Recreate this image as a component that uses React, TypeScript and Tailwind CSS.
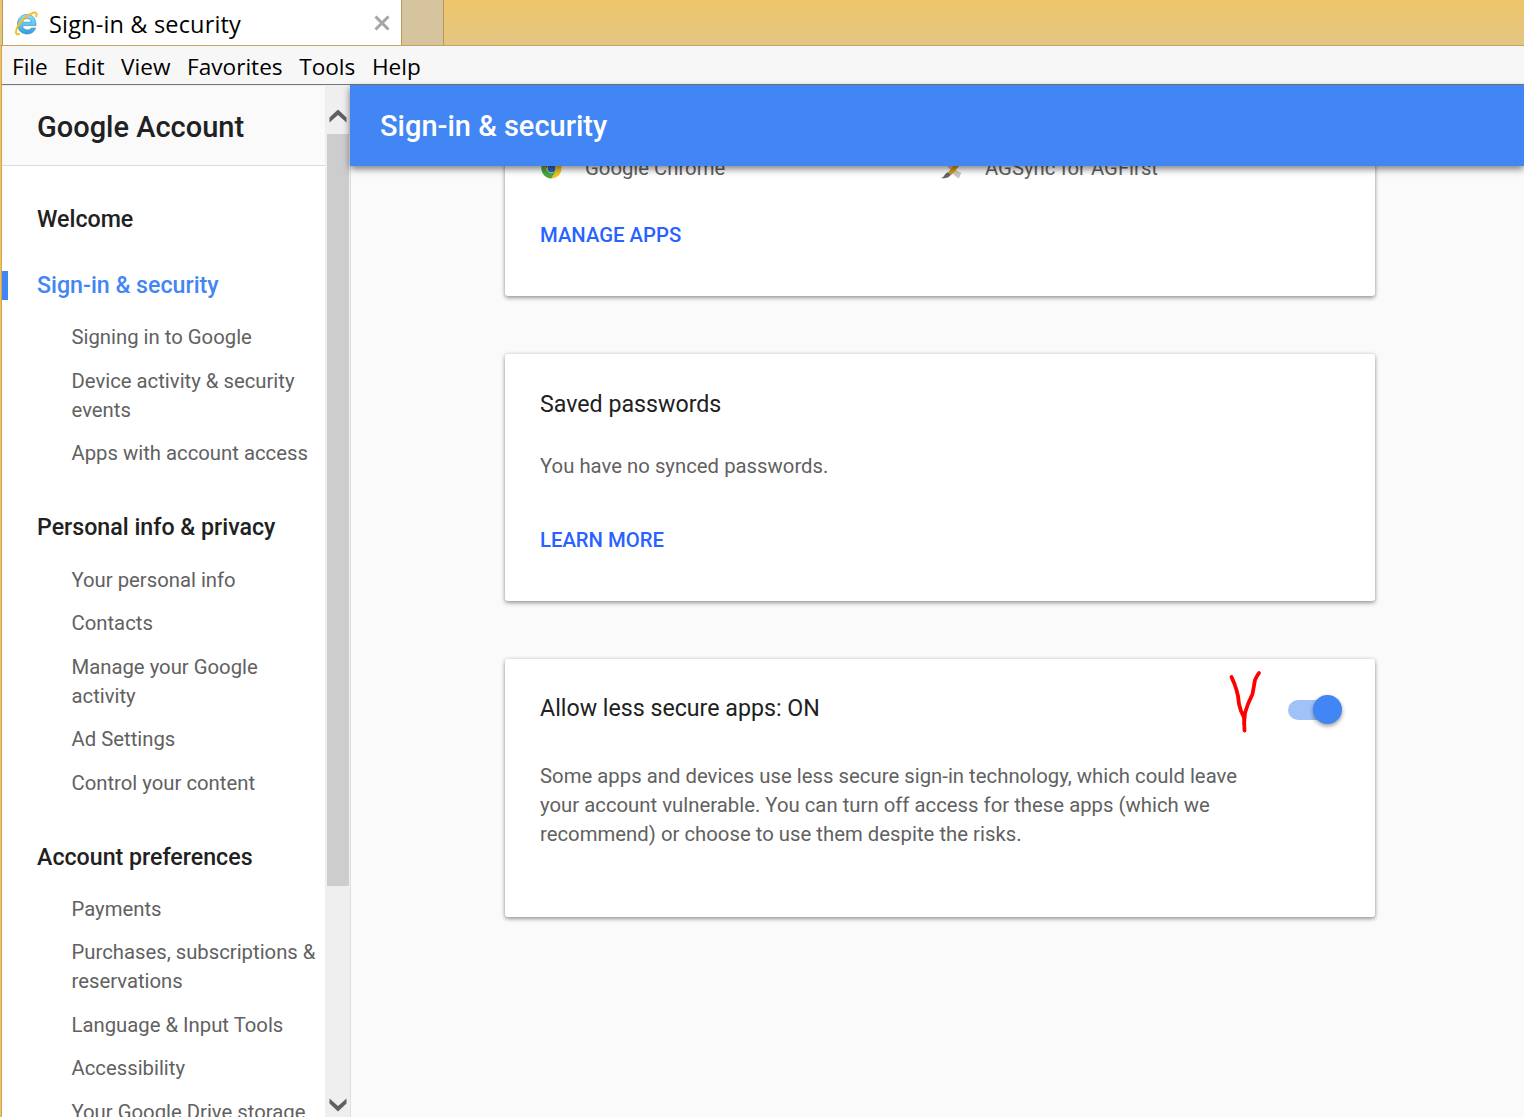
import React from 'react';

type Section = { title: string; active?: boolean; items: string[] };

const menu = ['File', 'Edit', 'View', 'Favorites', 'Tools', 'Help'];

const sections: Section[] = [
  {
    title: 'Sign-in & security',
    active: true,
    items: ['Signing in to Google', 'Device activity & security events', 'Apps with account access'],
  },
  {
    title: 'Personal info & privacy',
    items: ['Your personal info', 'Contacts', 'Manage your Google activity', 'Ad Settings', 'Control your content'],
  },
  {
    title: 'Account preferences',
    items: [
      'Payments',
      'Purchases, subscriptions & reservations',
      'Language & Input Tools',
      'Accessibility',
      'Your Google Drive storage',
    ],
  },
];

function ExplorerIcon() {
  return (
    <svg className="h-[26px] w-[26px] shrink-0" viewBox="0 0 26 26" fill="none">
      <defs>
        <linearGradient id="ie" x1="0" y1="0" x2="0" y2="1">
          <stop offset="0" stopColor="#8bdcf8" />
          <stop offset="0.55" stopColor="#5cc4f0" />
          <stop offset="1" stopColor="#3a96d0" />
        </linearGradient>
      </defs>
      <path
        d="M22 14.600H8.600c.2 3 2.100 4.300 4.800 4.300 1.900 0 3.200-.7 4-1.900h4.300C20.200 21 17.200 23 13.300 23 7.600 23 3.500 19.300 3.500 13.300 3.500 7.400 7.600 3.400 13 3.400c5.500 0 9 3.900 9 11.200ZM8.700 11.200h8.500c-.3-2.300-1.800-3.600-4.100-3.600-2.300 0-4 1.300-4.400 3.600Z"
        fill="url(#ie)"
        stroke="#2c86b8"
        strokeWidth="0.600"
      />
      <path
        d="M5 23C1.500 24.200.9 20.300 3.900 15.100 7.600 8.600 15 2.600 19.800 1.600c2.700-.4 3.300 1.300 2.400 3.800"
        stroke="#f8bf22"
        strokeWidth="2"
        strokeLinecap="round"
      />
    </svg>
  );
}

function ChromeIcon() {
  return (
    <svg className="ml-px h-[21px] w-[21px]" viewBox="0 0 22 22">
      <circle cx="11" cy="11" r="10.500" fill="#f5c518" />
      <path d="M11 11 1.900 5.700A10.500 10.500 0 0 1 20.100 5.700L11 6Z" fill="#c9201d" />
      <path d="M1.900 5.700A10.500 10.500 0 0 0 10.600 21.500L15.400 13.500 11 11 6.500 13.500Z" fill="#45a847" />
      <path d="M3 7 7 12 9 6Z" fill="#c9201d" />
      <circle cx="11" cy="11" r="5" fill="#e8eef5" />
      <circle cx="11" cy="11" r="4.200" fill="#2b69ad" />
    </svg>
  );
}

function ToolsIcon() {
  return (
    <svg className="h-[22px] w-[22px]" viewBox="0 0 22 22">
      <path d="M4 4 8 3l9 10 4.500 2-1 1.500-1.500 4-4-2.500Z" fill="#c9c9c9" />
      <path d="M8.500 14 16 4l4 3-8.500 10Z" fill="#d99a0b" />
      <path d="M1 20c3.500-.8 3.500-4.500 7-6l3 2.500c-1.500 3-5 4.200-10 3.500Z" fill="#666" />
    </svg>
  );
}

function Chevron({ down = false }: { down?: boolean }) {
  return (
    <svg className="h-[14px] w-[18px]" viewBox="0 0 18 14">
      <path
        d={down ? 'M0.500 0.500 9 8 17.500 0.500V5.500L9 13.500 0.500 5.500Z' : 'M0.500 13.500 9 6 17.500 13.500V8.500L9 0.500 0.500 8.500Z'}
        fill="#606060"
      />
    </svg>
  );
}

function Card({ className, children }: { className: string; children: React.ReactNode }) {
  return (
    <section
      className={
        'relative w-[870px] rounded-[3px] bg-white px-[35px] shadow-[0_2px_4px_rgba(0,0,0,0.36),0_0_4px_rgba(0,0,0,0.12)] ' +
        className
      }
    >
      {children}
    </section>
  );
}

function Action({ children }: { children: string }) {
  return <a className="block text-[20.300px] leading-[29px] font-medium text-[#2962ff]">{children}</a>;
}

export default function App() {
  return (
    <div className="flex h-[1117px] w-[1524px] flex-col overflow-hidden bg-[#edc368] font-['Roboto',sans-serif]">
      <div className="flex h-[46px] shrink-0 border-b border-[#c6a55c] bg-linear-to-b from-[#efc569] to-[#e2c684] pl-[2px]">
        <div className="flex w-[400px] items-center border-x border-[#b79a5b] bg-white pt-[2px] pr-[11px] pl-[11px]">
          <ExplorerIcon />
          <span className="ml-[9px] flex-1 pt-px font-['Open_Sans',sans-serif] text-[23.500px] leading-[30px] tracking-[0.170px] whitespace-nowrap text-black">
            Sign-in &amp; security
          </span>
          <svg className="-mt-[2px] h-[16px] w-[16px]" viewBox="0 0 16 16">
            <path d="M1.500 1.500 14.500 14.500M14.500 1.500 1.500 14.500" stroke="#a5a5a5" strokeWidth="3" />
          </svg>
        </div>
        <div className="w-[42px] border-r border-[#b79a5b] bg-[#d5c49e]" />
      </div>

      <div className="flex min-h-0 flex-1 flex-col border-l border-[#edc368]">
        <div className="flex min-h-0 flex-1 flex-col border-l border-[#cfa550]">
          <nav className="flex h-[39px] shrink-0 items-center gap-[16.600px] border-b border-[#777] bg-[#f7f7f7] pt-[4px] pl-[10px] font-['Open_Sans',sans-serif] text-[22.600px] text-black">
            {menu.map((m) => (
              <span key={m}>{m}</span>
            ))}
          </nav>

          <div className="flex min-h-0 flex-1">
            <aside className="flex w-[323px] shrink-0 flex-col bg-white">
              <div className="flex h-[81px] shrink-0 items-center border-y border-t-[#ececec] border-b-[#dcdcdc] bg-[#fafafa] pt-[4px] pl-[35px] text-[29px] font-medium text-[#212121]">
                Google Account
              </div>
              <div className="min-h-0 flex-1 overflow-hidden pt-[38.500px]">
                <h2 className="mb-[37.500px] pl-[35px] text-[23.200px] leading-[29px] font-medium text-[#212121]">Welcome</h2>
                {sections.map((s) => (
                  <div key={s.title} className="mb-[45.050px]">
                    <h2
                      className={
                        s.active
                          ? 'border-l-[6px] border-[#4285f4] pl-[29px] text-[23.200px] leading-[29px] font-medium text-[#4285f4]'
                          : 'pl-[35px] text-[23.200px] leading-[29px] font-medium text-[#212121]'
                      }
                    >
                      {s.title}
                    </h2>
                    <ul className="mt-[23.250px] flex flex-col gap-[14.500px] pr-[4px] pl-[69.500px] text-[20.300px] leading-[29px] text-[#616161]">
                      {s.items.map((i) => (
                        <li key={i}>{i}</li>
                      ))}
                    </ul>
                  </div>
                ))}
              </div>
            </aside>

            <div className="flex w-[25px] shrink-0 flex-col items-center bg-[#efefef]">
              <div className="flex h-[49px] items-start pt-[24px]">
                <Chevron />
              </div>
              <div className="ml-px h-[752px] w-[22px] bg-[#cdcdcd]" />
              <div className="mt-auto pb-[5px]">
                <Chevron down />
              </div>
            </div>

            <main className="flex min-w-0 flex-1 flex-col bg-[#fafafa]">
              <header className="relative z-10 flex h-[81px] shrink-0 items-center bg-[#4285f4] pt-[3px] pl-[30px] text-[29px] font-medium text-white shadow-[0_3px_7px_rgba(0,0,0,0.5)]">
                Sign-in &amp; security
              </header>
              <div className="min-h-0 flex-1 overflow-hidden border-l border-[#dedede] pl-[154px]">
                <Card className="-mt-[20px] h-[150px] pt-[8px]">
                  <div className="flex text-[20.300px] leading-[29px] text-[#616161]">
                    <div className="flex w-[400px] items-center gap-[23px]">
                      <ChromeIcon />
                      Google Chrome
                    </div>
                    <div className="flex items-center gap-[23px]">
                      <ToolsIcon />
                      AGSync for AGFirst
                    </div>
                  </div>
                  <div className="mt-[38px]">
                    <Action>MANAGE APPS</Action>
                  </div>
                </Card>

                <Card className="mt-[58px] h-[247px] pt-[36px]">
                  <h3 className="text-[23.200px] leading-[29px] text-[#212121]">Saved passwords</h3>
                  <p className="mt-[33px] mb-[45px] text-[20.300px] leading-[29px] tracking-[0.020px] text-[#616161]">
                    You have no synced passwords.
                  </p>
                  <Action>LEARN MORE</Action>
                </Card>

                <Card className="mt-[58px] h-[258px] pt-[35px]">
                  <div className="flex items-center justify-between">
                    <h3 className="text-[23.200px] leading-[29px] text-[#212121]">Allow less secure apps: ON</h3>
                    <div className="relative mt-[2px] mr-[-2px] h-[20px] w-[54px]">
                      <div className="h-[20px] w-[50px] rounded-full bg-[#a0c2f9]" />
                      <div className="absolute -top-[5px] right-0 h-[29px] w-[29px] rounded-full bg-[#4285f4] shadow-[0_2px_4px_rgba(0,0,0,0.4)]" />
                    </div>
                  </div>
                  <p className="mt-[39px] w-[705px] text-[20.300px] leading-[29px] tracking-[0.020px] text-[#616161]">
                    Some apps and devices use less secure sign-in technology, which could leave your account vulnerable. You
                    can turn off access for these apps (which we recommend) or choose to use them despite the risks.
                  </p>
                  <svg className="absolute top-[9px] left-[723px] h-[66px] w-[36px]" viewBox="0 0 36 66">
                    <path
                      d="M3.500 9 6.500 16 8.500 22 10 28 11 36 13 43 16 49.500 16.500 62.500M16 56 17 45 20 36 24.500 26 27 12 29 8 31 5"
                      fill="none"
                      stroke="#f00"
                      strokeWidth="3.800"
                      strokeLinecap="round"
                      strokeLinejoin="round"
                    />
                  </svg>
                </Card>
              </div>
            </main>
          </div>
        </div>
      </div>
    </div>
  );
}
